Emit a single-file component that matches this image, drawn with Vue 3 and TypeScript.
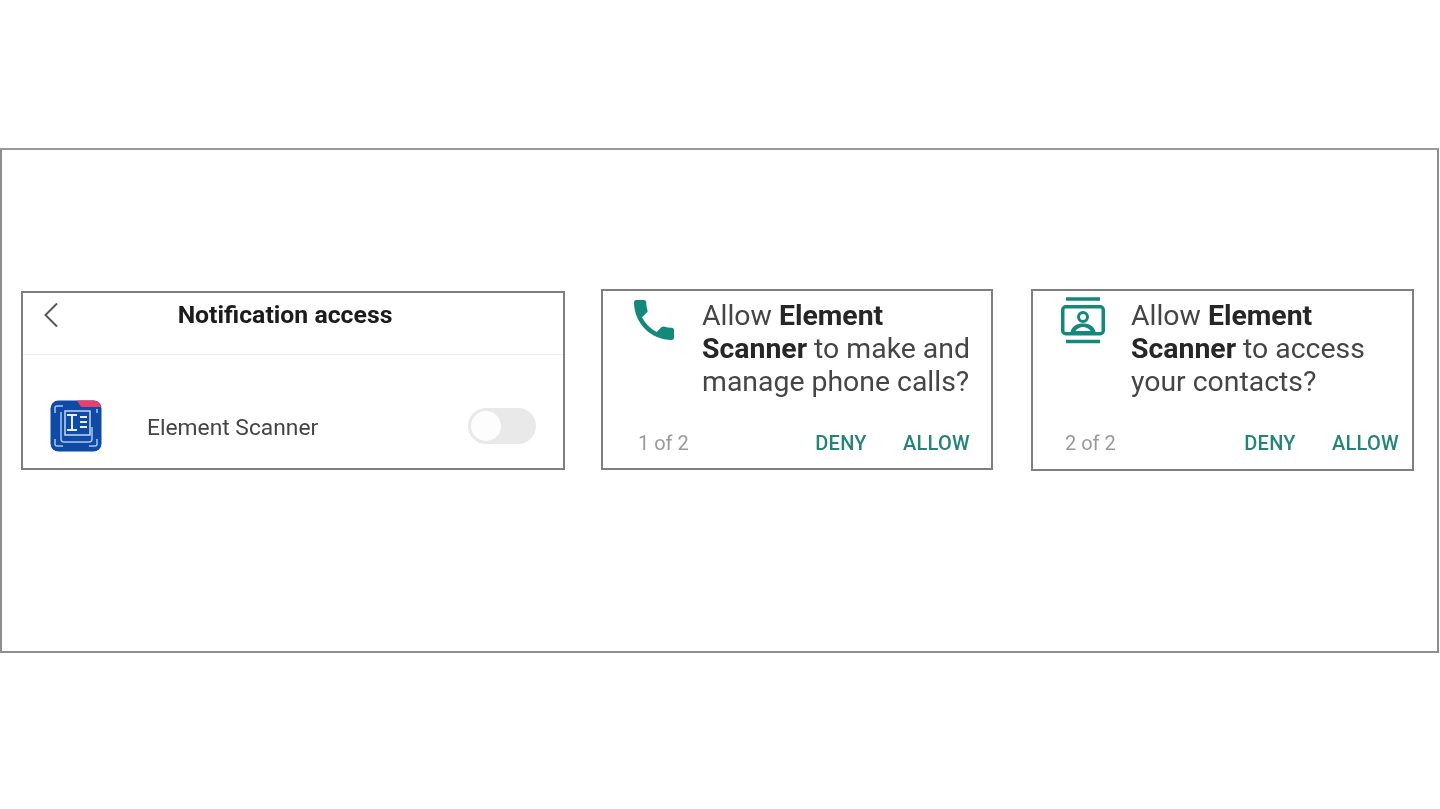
<script setup lang="ts">
interface Dialog {
  rest: string;
  tail: string;
  step: string;
  kind: "phone" | "contacts";
}
const dialogs: Dialog[] = [
  { rest: "to make and", tail: "manage phone calls?", step: "1 of 2", kind: "phone" },
  { rest: "to access", tail: "your contacts?", step: "2 of 2", kind: "contacts" },
];
</script>

<template>
  <main class="page">
    <section class="frame">
      <article class="card settings">
        <header class="bar">
          <svg class="back" width="16" height="26" viewBox="0 0 16 26" fill="none">
            <path d="M14 1.5 2.5 13 14 24.5" stroke="#55595c" stroke-width="2" />
          </svg>
          <h1 class="title">Notification access</h1>
        </header>
        <div class="row">
          <svg class="app" width="52" height="52" viewBox="0 0 52 52">
            <rect width="51" height="51" x="0.5" y="0.5" rx="8" fill="#0f4aa6" />
            <path d="M27 .5h16.500a8 8 0 0 1 8 6.500H31z" fill="#e93f6d" />
            <g fill="none" stroke="#a9c6ec" stroke-width="1.500">
              <path d="M5 13V8a2 2 0 0 1 2-2h6M47 13V9M5 39v5a2 2 0 0 0 2 2h6M47 39v5a2 2 0 0 1-2 2h-6" />
              <path d="M11 12v27a3 3 0 0 0 3 3h25a3 3 0 0 0 3-3V27" />
              <path d="M15 11h25v24H15z" stroke="#c4d8f2" />
              <path d="M17 15h10M22 15v15M17 30h10M30 17h7M30 22h7M30 27h7" stroke="#e6eefa" stroke-width="2" />
            </g>
          </svg>
          <span class="name">Element Scanner</span>
          <span class="toggle"><span class="knob"></span></span>
        </div>
      </article>

      <article v-for="d in dialogs" :key="d.step" class="card dialog" :class="d.kind">
        <div class="body">
          <div class="icon-slot">
            <svg v-if="d.kind === 'phone'" width="40" height="40" viewBox="3 3 18 18">
              <path fill="#14897b" d="M6.620 10.790c1.440 2.830 3.760 5.140 6.590 6.590l2.200-2.200c.270-.270.670-.360 1.020-.240 1.120.370 2.330.570 3.570.570.550 0 1 .450 1 1V20c0 .550-.450 1-1 1-9.390 0-17-7.610-17-17 0-.550.450-1 1-1h3.500c.550 0 1 .450 1 1 0 1.250.200 2.450.570 3.570.110.350.030.740-.250 1.020l-2.200 2.200z" />
            </svg>
            <svg v-else width="45" height="48" viewBox="0 0 45 48" fill="none">
              <path d="M5 3h34M5 45.500h34" stroke="#14897b" stroke-width="3.500" />
              <rect x="1.750" y="10.750" width="40.500" height="27" rx="3" stroke="#14897b" stroke-width="3.500" />
              <circle cx="22" cy="21" r="4.500" stroke="#14897b" stroke-width="3" />
              <path d="M9.500 36c1-6 7-8.500 12.500-8.500s11.500 2.500 12.500 8.500z" fill="#14897b" />
              <path d="M14.500 35c2-3 5-4 7.500-4s5.500 1 7.500 4z" fill="#fff" />
            </svg>
          </div>
          <p class="question">
            <span class="line">Allow <b>Element</b></span>
            <span class="line"><b>Scanner</b> {{ d.rest }}</span>
            <span class="line">{{ d.tail }}</span>
          </p>
        </div>
        <footer class="actions">
          <span class="step">{{ d.step }}</span>
          <span class="btn deny">DENY</span>
          <span class="btn">ALLOW</span>
        </footer>
      </article>
    </section>
  </main>
</template>

<style>
html,
body {
  margin: 0;
  background: #fff;
}
</style>

<style scoped>
.page {
  height: 809px;
  box-sizing: border-box;
  padding-top: 148px;
  font-family: Roboto, "Liberation Sans", sans-serif;
  overflow: hidden;
}
.frame {
  box-sizing: border-box;
  width: 1439px;
  height: 505px;
  border: 2px solid #8f8f8f;
  border-top-color: #9a9a9a;
  padding: 139px 0 0 19px;
  display: flex;
  align-items: flex-start;
  filter: blur(0.5px);
}
.card {
  box-sizing: border-box;
  border: 2px solid #7f7f7f;
  background: #fff;
  flex: none;
}
.settings {
  width: 544px;
  height: 179px;
  margin-top: 2px;
  margin-right: 36px;
  display: flex;
  flex-direction: column;
}
.bar {
  position: relative;
  height: 62px;
  border-bottom: 1px solid #ececec;
  box-sizing: border-box;
  display: flex;
  justify-content: center;
  padding: 7px 16px 0 0;
}
.back {
  position: absolute;
  left: 20px;
  top: 9px;
}
.title {
  margin: 0;
  font-size: 24.800px;
  line-height: 30px;
  font-weight: 700;
  color: #1c1c1c;
}
.row {
  flex: 1;
  display: flex;
  align-items: center;
  padding: 0 27px;
  margin-top: 29px;
}
.name {
  margin-left: 45px;
  padding-top: 3px;
  font-size: 22.800px;
  color: #444;
  flex: 1;
}
.toggle {
  width: 68px;
  height: 36px;
  border-radius: 18px;
  background: #e9e9e9;
  display: flex;
  align-items: center;
}
.knob {
  width: 30px;
  height: 30px;
  margin-left: 3px;
  border-radius: 50%;
  background: #fdfdfd;
}
.dialog {
  display: flex;
  flex-direction: column;
  justify-content: space-between;
}
.phone {
  width: 392px;
  height: 181px;
  margin-right: 38px;
}
.contacts {
  width: 383px;
  height: 182px;
}
.body {
  display: flex;
  padding-top: 8px;
}
.icon-slot {
  width: 99px;
  flex: none;
  padding: 1px 0 0 31px;
  box-sizing: border-box;
}
.contacts .icon-slot {
  width: 98px;
  padding: 0 0 0 28px;
  margin-top: -3px;
}
.question {
  margin: 0;
  font-size: 28.400px;
  line-height: 33px;
  color: #454545;
}
.line {
  display: block;
  white-space: nowrap;
}
.question b {
  color: #262626;
  font-weight: 700;
}
.actions {
  display: flex;
  align-items: center;
  height: 26px;
  padding: 0 21px 0 35px;
  margin-bottom: 12px;
  font-size: 20px;
}
.contacts .actions {
  padding: 0 13px 0 32px;
  margin-bottom: 13px;
}
.step {
  flex: 1;
  color: #9a9a9a;
}
.btn {
  color: #238478;
  font-weight: 500;
  letter-spacing: .3px;
}
.deny {
  margin-right: 36px;
}
</style>
